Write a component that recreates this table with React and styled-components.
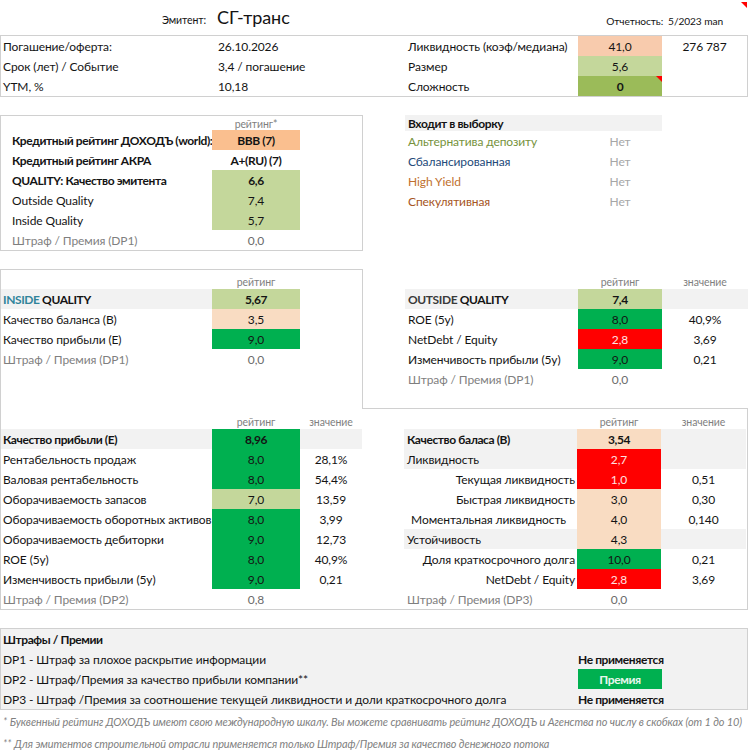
import React from 'react';
import styled, { createGlobalStyle } from 'styled-components';

const GlobalStyle = createGlobalStyle`
  html, body { margin: 0; padding: 0; background: #fff; }
  body {
    font-family: Lato, "Open Sans", sans-serif;
    font-size: 12px;
    letter-spacing: -0.1px;
    color: #141414;
  }
`;

const C = {
  border: '#d0d0d0',
  gray: '#f2f2f2',
  peach: '#f8cbad',
  orange: '#fabf8f',
  lightPeach: '#f9dcc2',
  lightGreen: '#c4d79b',
  olive: '#9bbb59',
  green: '#00b050',
  red: '#ff0000',
  muted: '#7f7f7f',
};

const Page = styled.div`
  position: relative;
  width: 748px;
`;

const Header = styled.div`
  display: flex;
  align-items: center;
  height: 35px;
`;

const IssuerLabel = styled.span`
  width: 206px;
  text-align: right;
  font-size: 10.5px;
  padding-top: 5px;
`;

const IssuerName = styled.span`
  margin-left: 11px;
  font-size: 18px;
  padding-bottom: 1px;
`;

const ReportLabel = styled.span`
  margin-left: auto;
  margin-right: 25px;
  font-size: 10.2px;
  padding-top: 6px;
`;

const CornerMark = styled.span`
  position: absolute;
  top: ${p => p.$top}px;
  right: ${p => p.$right}px;
  width: 0;
  height: 0;
  border-top: 6px solid ${C.red};
  border-left: 6px solid transparent;
`;

const Box = styled.div`
  border: 1px solid ${C.border};
  background: ${p => p.$bg || '#fff'};
  margin-top: ${p => p.$mt || 0}px;
`;

const Row = styled.div`
  display: grid;
  grid-template-columns: ${p => p.$cols};
  height: ${p => p.$h || 20}px;
`;

const Cell = styled.div`
  position: relative;
  display: flex;
  align-items: ${p => (p.$bottom ? 'flex-end' : 'center')};
  justify-content: ${p =>
    p.$align === 'right' ? 'flex-end' : p.$align === 'center' ? 'center' : 'flex-start'};
  padding: ${p => (p.$bottom ? '0 0 1px 0' : '1px 0 0 0')};
  padding-left: ${p => p.$pl ?? 2}px;
  padding-right: ${p => p.$pr ?? 2}px;
  background: ${p => p.$bg || 'transparent'};
  color: ${p => p.$color || '#141414'};
  font-weight: ${p => (p.$bold ? 700 : 400)};
  letter-spacing: ${p => (p.$bold ? '-0.4px' : '-0.1px')};
  white-space: nowrap;
  min-width: 0;
`;

const Caption = styled(Cell).attrs({ $align: 'center' })`
  font-size: 10.5px;
  color: ${C.muted};
`;

const Rating = styled(Cell).attrs({ $align: 'center' })``;

const Value = styled(Cell).attrs({ $align: 'center' })``;

const Accent = styled.span`
  color: ${p => p.$color};
`;

const Split = styled.div`
  display: flex;
  align-items: flex-start;
  margin-top: ${p => p.$mt || 0}px;
`;

const LeftBox = styled.div`
  width: 361px;
  border: 1px solid ${C.border};
`;

const SelectionList = styled.div`
  margin-left: 42px;
  width: 342px;
`;

const QualityBlock = styled.div`
  margin-top: 18px;
  width: 748px;
`;

const QualityTop = styled.div`
  display: flex;
  height: 140px;
`;

const InsidePanel = styled.div`
  width: 361px;
  border: 1px solid ${C.border};
  border-bottom: none;
`;

const OutsidePanel = styled.div`
  width: 385px;
  border-bottom: 1px solid ${C.border};
  padding-top: 1px;
  box-sizing: border-box;
`;

const QualityBottom = styled.div`
  display: flex;
  border: 1px solid ${C.border};
  border-top: none;
`;

const Table = styled.div`
  width: ${p => p.$w}px;
`;

const Penalties = styled.div`
  margin-top: 18px;
  border: 1px solid ${C.border};
  background: ${C.gray};
`;

const PremiumBadge = styled(Cell).attrs({ $align: 'center', $bold: true })`
  color: #eaf7ee;
`;

const Notes = styled.div``;

const Note = styled.div`
  height: 22px;
  display: flex;
  align-items: center;
  padding-left: 3px;
  font-size: 10.95px;
  font-style: italic;
  color: ${C.muted};
  white-space: nowrap;
`;

const textOn = bg => (bg === C.red ? '#ffe0e0' : '#141414');

const INFO_COLS = '215px 189px 173px 84px 85px';
const LEFT_COLS = '211px 88px 62px';
const RIGHT_COLS = '42px 173px 84px 85px';
const RIGHT_COLS_TOP = '42px 173px 84px 86px';

const info = [
  ['Погашение/оферта:', '26.10.2026', 'Ликвидность (коэф/медиана)', '41,0', C.peach, '276 787', false],
  ['Срок (лет) / Событие', '3,4 / погашение', 'Размер', '5,6', C.lightGreen, '', false],
  ['YTM, %', '10,18', 'Сложность', '0', C.olive, '', true],
];

const credit = [
  { label: 'Кредитный рейтинг ДОХОДЪ (world):', bold: true, r: 'BBB (7)', bg: C.orange, rb: true },
  { label: 'Кредитный рейтинг АКРА', bold: true, r: 'A+(RU) (7)', rb: true },
  { label: 'QUALITY: Качество эмитента', bold: true, r: '6,6', bg: C.lightGreen, rb: true },
  { label: 'Outside Quality', r: '7,4', bg: C.lightGreen },
  { label: 'Inside Quality', r: '5,7', bg: C.lightGreen },
  { label: 'Штраф / Премия (DP1)', r: '0,0', muted: true },
];

const selection = [
  ['Альтернатива депозиту', '#76923c'],
  ['Сбалансированная', '#244a7a'],
  ['High Yield', '#c0702e'],
  ['Спекулятивная', '#a65524'],
];

const inside = [
  { label: 'Качество баланса (B)', r: '3,5', bg: C.lightPeach },
  { label: 'Качество прибыли (E)', r: '9,0', bg: C.green },
  { label: 'Штраф / Премия (DP1)', r: '0,0', muted: true },
];

const outside = [
  { label: 'ROE (5y)', r: '8,0', bg: C.green, v: '40,9%' },
  { label: 'NetDebt / Equity', r: '2,8', bg: C.red, v: '3,69' },
  { label: 'Изменчивость прибыли (5y)', r: '9,0', bg: C.green, v: '0,21' },
  { label: 'Штраф / Премия (DP1)', r: '0,0', muted: true },
];

const earnings = [
  { label: 'Рентабельность продаж', r: '8,0', bg: C.green, v: '28,1%' },
  { label: 'Валовая рентабельность', r: '8,0', bg: C.green, v: '54,4%' },
  { label: 'Оборачиваемость запасов', r: '7,0', bg: C.lightGreen, v: '13,59' },
  { label: 'Оборачиваемость оборотных активов', r: '8,0', bg: C.green, v: '3,99' },
  { label: 'Оборачиваемость дебиторки', r: '9,0', bg: C.green, v: '12,73' },
  { label: 'ROE (5y)', r: '8,0', bg: C.green, v: '40,9%' },
  { label: 'Изменчивость прибыли (5y)', r: '9,0', bg: C.green, v: '0,21' },
  { label: 'Штраф / Премия (DP2)', r: '0,8', muted: true },
];

const balance = [
  { label: 'Ликвидность', r: '2,7', bg: C.red, group: true },
  { label: 'Текущая ликвидность', r: '1,0', bg: C.red, v: '0,51', right: true },
  { label: 'Быстрая ликвидность', r: '3,0', bg: C.lightPeach, v: '0,30', right: true },
  { label: 'Моментальная ликвидность', r: '4,0', bg: C.lightPeach, v: '0,140', right: true, pr: 11 },
  { label: 'Устойчивость', r: '4,3', bg: C.lightPeach, group: true },
  { label: 'Доля краткосрочного долга', r: '10,0', bg: C.green, v: '0,21', right: true },
  { label: 'NetDebt / Equity', r: '2,8', bg: C.red, v: '3,69', right: true },
  { label: 'Штраф / Премия (DP3)', r: '0,0', muted: true },
];

const penalties = [
  ['DP1 - Штраф за плохое раскрытие информации', 'Не применяется', false],
  ['DP2 - Штраф/Премия за качество прибыли компании**', 'Премия', true],
  ['DP3 - Штраф /Премия за соотношение текущей ликвидности и доли краткосрочного долга', 'Не применяется', false],
];

function LeftRows({ rows, withValue, pl = 2 }) {
  return rows.map((row, i) => (
    <Row key={i} $cols={LEFT_COLS}>
      <Cell $pl={pl} $bold={row.bold} $color={row.muted ? C.muted : undefined}>
        {row.label}
      </Cell>
      <Rating $bg={row.bg} $bold={row.rb} $color={row.muted ? '#6b6b6b' : textOn(row.bg)}>
        {row.r}
      </Rating>
      <Value>{withValue ? row.v : ''}</Value>
    </Row>
  ));
}

function RightRows({ rows, cols }) {
  return rows.map((row, i) => (
    <Row key={i} $cols={cols}>
      <Cell />
      <Cell
        $pl={row.right ? 2 : 3}
        $pr={row.pr ?? 2}
        $align={row.right ? 'right' : 'left'}
        $bg={row.group ? C.gray : undefined}
        $color={row.muted ? C.muted : undefined}
      >
        {row.label}
      </Cell>
      <Rating $bg={row.bg} $color={row.muted ? '#6b6b6b' : textOn(row.bg)}>
        {row.r}
      </Rating>
      <Value $bg={row.group ? C.gray : undefined}>{row.v || ''}</Value>
    </Row>
  ));
}

export default function App() {
  return (
    <Page>
      <GlobalStyle />
      <CornerMark $top={2} $right={1} />
      <Header>
        <IssuerLabel>Эмитент:</IssuerLabel>
        <IssuerName>СГ-транс</IssuerName>
        <ReportLabel>Отчетность:&nbsp; 5/2023 man</ReportLabel>
      </Header>

      <Box>
        {info.map(([l, v, rl, r, bg, extra, mark], i) => (
          <Row key={i} $cols={INFO_COLS}>
            <Cell>{l}</Cell>
            <Cell>{v}</Cell>
            <Cell $pl={3}>{rl}</Cell>
            <Rating $bg={bg} $bold={mark}>
              {r}
              {mark && <CornerMark $top={0} $right={0} />}
            </Rating>
            <Value>{extra}</Value>
          </Row>
        ))}
      </Box>

      <Split $mt={18}>
        <LeftBox>
          <Row $cols={LEFT_COLS} $h={14}>
            <Cell />
            <Caption>рейтинг*</Caption>
            <Cell />
          </Row>
          <LeftRows rows={credit} pl={11} />
        </LeftBox>
        <SelectionList>
          <Row $cols="257px 85px" $h={16}>
            <Cell $pl={3} $bold $bg={C.gray}>Входит в выборку</Cell>
            <Cell />
          </Row>
          {selection.map(([label, color]) => (
            <Row key={label} $cols="173px 84px 85px">
              <Cell $pl={3} $color={color}>{label}</Cell>
              <Value $color="#a6a6a6">Нет</Value>
              <Cell />
            </Row>
          ))}
        </SelectionList>
      </Split>

      <QualityBlock>
        <QualityTop>
          <InsidePanel>
            <Row $cols={LEFT_COLS} $h={19}>
              <Cell />
              <Caption $bottom>рейтинг</Caption>
              <Cell />
            </Row>
            <Row $cols={LEFT_COLS}>
              <Cell $bold $bg={C.gray}>
                <Accent $color="#31849b">INSIDE</Accent>&nbsp;QUALITY
              </Cell>
              <Rating $bg={C.lightGreen} $bold>5,67</Rating>
              <Cell />
            </Row>
            <LeftRows rows={inside} />
          </InsidePanel>
          <OutsidePanel>
            <Row $cols={RIGHT_COLS_TOP} $h={19}>
              <Cell />
              <Cell />
              <Caption $bottom>рейтинг</Caption>
              <Caption $bottom>значение</Caption>
            </Row>
            <Row $cols={RIGHT_COLS_TOP}>
              <Cell />
              <Cell $pl={3} $bold $bg={C.gray}>
                <Accent $color="#3a3a3a">OUTSIDE</Accent>&nbsp;QUALITY
              </Cell>
              <Rating $bg={C.lightGreen} $bold>7,4</Rating>
              <Cell $bg={C.gray} />
            </Row>
            <RightRows rows={outside} cols={RIGHT_COLS_TOP} />
          </OutsidePanel>
        </QualityTop>

        <QualityBottom>
          <Table $w={361}>
            <Row $cols={LEFT_COLS}>
              <Cell />
              <Caption $bottom>рейтинг</Caption>
              <Caption $bottom>значение</Caption>
            </Row>
            <Row $cols={LEFT_COLS}>
              <Cell $bold $bg={C.gray}>Качество прибыли (E)</Cell>
              <Rating $bg={C.green} $bold>8,96</Rating>
              <Cell $bg={C.gray} />
            </Row>
            <LeftRows rows={earnings} withValue />
          </Table>
          <Table $w={385}>
            <Row $cols={RIGHT_COLS}>
              <Cell />
              <Cell />
              <Caption $bottom>рейтинг</Caption>
              <Caption $bottom>значение</Caption>
            </Row>
            <Row $cols={RIGHT_COLS}>
              <Cell />
              <Cell $pl={3} $bold $bg={C.gray}>Качество баласа (B)</Cell>
              <Rating $bg={C.lightPeach} $bold>3,54</Rating>
              <Cell $bg={C.gray} />
            </Row>
            <RightRows rows={balance} cols={RIGHT_COLS} />
          </Table>
        </QualityBottom>
      </QualityBlock>

      <Penalties>
        <Row $cols="577px 84px 85px">
          <Cell $bold>Штрафы / Премии</Cell>
          <Cell />
          <Cell />
        </Row>
        {penalties.map(([label, status, premium]) => (
          <Row key={label} $cols="577px 84px 85px">
            <Cell>{label}</Cell>
            {premium ? (
              <PremiumBadge $bg={C.green}>{status}</PremiumBadge>
            ) : (
              <Cell $pl={0} $bold>{status}</Cell>
            )}
            <Cell />
          </Row>
        ))}
      </Penalties>

      <Notes>
        <Note>* Буквенный рейтинг ДОХОДЪ имеют свою международную шкалу. Вы можете сравнивать рейтинг ДОХОДЪ и Агенства по числу в скобках (от 1 до 10)</Note>
        <Note>** Для эмитентов строительной отрасли применяется только Штраф/Премия за качество денежного потока</Note>
      </Notes>
    </Page>
  );
}
